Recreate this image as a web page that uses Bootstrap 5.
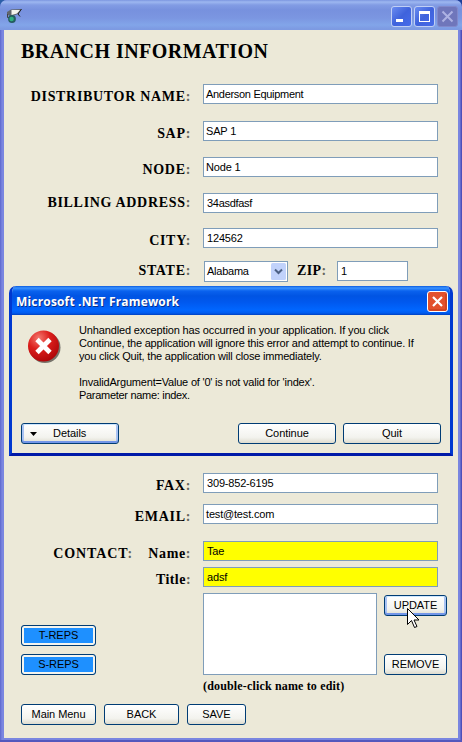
<!DOCTYPE html>
<html lang="en">
<head>
<meta charset="utf-8">
<meta name="viewport" content="width=device-width, initial-scale=1">
<title>Branch Information</title>
<link href="https://cdn.jsdelivr.net/npm/bootstrap@5.3.0/dist/css/bootstrap.min.css" rel="stylesheet">
<style>
body{width:462px;height:742px;overflow:hidden;background:linear-gradient(90deg,#2c5fa8,#1d3f98);font:11px/13px "Liberation Sans",Arial,sans-serif;color:#000}
.app-window{width:462px;height:742px;border-radius:7px 7px 0 0;background:linear-gradient(90deg,#5c66cc 0,#7a86e0 2px,#7a86e0 460px,#4d4fb8 461px);border-bottom:2px solid #5457bd;overflow:hidden}
.app-title{height:30px;padding:6px 4px 0 6px;background:linear-gradient(#7c96e0 0,#9db7f0 2px,#829ce4 5px,#7791de 10px,#7b96e1 18px,#82a5e9 25px,#7d9ae2 29px)}
.app-client{height:708px;margin:0 4px;padding:9px 11px 0 17px;background:#ece9d8}
.tools{gap:2px}
.tool{width:21px;height:21px;border:1px solid #c0cff5;border-radius:3px;background:linear-gradient(135deg,#6a8cf0,#3f63dc 50%,#466bea)}
.tool-off{border-color:#8189cb;background:#6f76bb}
h1{font:bold 20px/24px "Liberation Serif","Times New Roman",serif;letter-spacing:.46px;margin:0 0 21px}
.f-row{display:flex;align-items:flex-start;margin-bottom:16px}
.gap-6{margin-bottom:6px}.gap-11{margin-bottom:11px}.gap-13{margin-bottom:13px}.gap-15{margin-bottom:15px}.gap-17{margin-bottom:17px}
.f-label{font:bold 14px/14px "Liberation Serif","Times New Roman",serif;letter-spacing:.68px;text-align:right;white-space:nowrap;width:170px;height:20px;margin-right:12px;padding-top:6px;flex:none}
.f-label.raised{padding-top:3px}
.f-label.narrow{letter-spacing:.45px}
.f-label i{font-style:normal;color:#66655c}
.contact{letter-spacing:.9px}
.name-part{width:58px;letter-spacing:.6px}
.state-row{height:212px}
.state-label{margin-right:13px}
.zip-label{width:28px;margin:0 12px 0 9px;letter-spacing:.4px;text-align:left}
.f-box{width:235px;height:20px;border:1px solid #7f9db9;background:#fff;padding:3px 2px 0;line-height:13px;white-space:nowrap;letter-spacing:-.18px}
.f-box.tight{letter-spacing:-.3px}
.f-box.digits{padding-left:3px}
.f-box.state{width:84px;height:21px;padding-right:1px;letter-spacing:-.25px}
.f-box.state svg{margin-top:-2px}
.f-box.zip{width:71px;padding-left:3px}
.f-box.hot{background:#ff0;padding-left:3px}
.f-box.f-list{width:174px;height:82px}
.list-area{height:82px}
.reps-col{width:182px;gap:8px}
.edit-col{width:63px;margin-left:7px;padding-top:2px}
.xp{height:21px;border:1px solid #003c74;border-radius:3px;padding:0;font-size:11px;line-height:19px;color:#000;background:linear-gradient(#fff,#f3f3ee 70%,#dedccf);white-space:nowrap;letter-spacing:-.05px}
.xp.focus-blue{box-shadow:inset 0 1px #cee7ff,inset 0 -2px #7396e8,inset 2px 0 #a9c3f3,inset -2px 0 #a9c3f3}
.xp.reps{background:#1e90ff;box-shadow:inset 0 0 0 2px #f4f4ee}
.w-75px{width:75px}.w-59px{width:59px}.w-98px{width:98px}
.details{padding-left:8px}
.details span{margin-left:16px}
.continue{margin-left:119px}
.quit{margin-left:7px}
.dialog{position:absolute;left:9px;top:286px;width:444px;height:170px;border-radius:7px 7px 0 0;background:#ece9d8;border:3px solid #0038d0;border-top:0;border-bottom-color:#0019a8;overflow:hidden;z-index:2}
.dialog-bar{height:29px;margin:0 -3px;padding:2px 5px 0 7px;background:linear-gradient(#0a5ae0 0,#3a93ff 2px,#0a62ee 5px,#0054e3 10px,#0058ee 16px,#0066ff 24px,#005cf0 27px,#0040c0 29px)}
.dialog-name{font:bold 12px/16px "Open Sans","Noto Sans",sans-serif;letter-spacing:.17px;color:#fff;text-shadow:1px 1px #0a2f8c;white-space:nowrap;padding-top:1px}
.dialog-text{height:108px;padding:9px 0 0 16px}
.error-icon{margin-top:6px;flex:none}
.msg{white-space:nowrap;margin-left:17px;letter-spacing:-.2px}
.msg .first{letter-spacing:-.14px}
.msg .last{letter-spacing:-.3px}
.dialog-actions{padding-left:9px}
.note{font:bold 12px/13px "Liberation Serif","Times New Roman",serif;letter-spacing:.16px;margin:5px 0 11px 182px}
.pointer{position:absolute;left:407px;top:608px;z-index:3}
</style>
</head>
<body>
<div class="app-window">
  <div class="app-title d-flex align-items-start">
    <svg width="18" height="18" viewBox="0 0 18 18"><path d="M1 6 5 3.500 15.500 3 12 8 5 10.500 1 8.500z" fill="#60656b"/><path d="M5.500 4h8.500l-3 3.500-5.500 1.500z" fill="#f4f4ee"/><path d="M15.500 3 12 8l2 2.500" fill="none" stroke="#222"/><path d="M1.500 8v3.500h3" fill="none" stroke="#444"/><circle cx="6" cy="13" r="3.900" fill="#245d60"/><circle cx="5.600" cy="13" r="2.200" fill="#2fb080"/></svg>
    <div class="d-flex ms-auto tools">
      <div class="tool"><svg class="d-block" width="19" height="19"><path d="M4 12h7v3H4z" fill="#fff"/></svg></div>
      <div class="tool"><svg class="d-block" width="19" height="19"><path d="M4 4h11v11H4zM5 7v7h9V7z" fill="#fff" fill-rule="evenodd"/></svg></div>
      <div class="tool tool-off"><svg class="d-block" width="19" height="19"><path d="M4.500 4.500l10 10m0-10l-10 10" stroke="#adb2e3" stroke-width="2"/></svg></div>
    </div>
  </div>
  <main class="app-client">
    <h1>BRANCH INFORMATION</h1>
    <div class="f-row gap-17"><div class="f-label">DISTRIBUTOR NAME<i>:</i></div><div class="f-box tight">Anderson Equipment</div></div>
    <div class="f-row"><div class="f-label">SAP<i>:</i></div><div class="f-box">SAP 1</div></div>
    <div class="f-row"><div class="f-label">NODE<i>:</i></div><div class="f-box">Node 1</div></div>
    <div class="f-row gap-15"><div class="f-label raised">BILLING ADDRESS<i>:</i></div><div class="f-box tight digits">34asdfasf</div></div>
    <div class="f-row gap-13"><div class="f-label">CITY<i>:</i></div><div class="f-box digits">124562</div></div>
    <div class="f-row mb-0 state-row"><div class="f-label raised state-label">STATE<i>:</i></div>
      <div class="f-box state d-flex">Alabama
        <svg class="ms-auto" width="15" height="17"><rect width="15" height="17" rx="1.500" fill="#c1d2fb"/><path d="M4 6.500l3.500 3.500L11 6.500" fill="none" stroke="#4d6185" stroke-width="2"/></svg></div>
      <div class="f-label raised zip-label">ZIP<i>:</i></div>
      <div class="f-box zip">1</div>
    </div>
    <div class="f-row gap-11"><div class="f-label">FAX<i>:</i></div><div class="f-box digits">309-852-6195</div></div>
    <div class="f-row gap-17"><div class="f-label">EMAIL<i>:</i></div><div class="f-box">test@test.com</div></div>
    <div class="f-row gap-6"><div class="f-label"><span class="contact">CONTACT<i>:</i></span><span class="d-inline-block name-part">Name<i>:</i></span></div><div class="f-box hot">Tae</div></div>
    <div class="f-row gap-6"><div class="f-label narrow">Title<i>:</i></div><div class="f-box hot">adsf</div></div>
    <div class="d-flex list-area">
      <div class="d-flex flex-column justify-content-end reps-col"><button class="btn xp reps w-75px">T-REPS</button><button class="btn xp reps w-75px">S-REPS</button></div>
      <div class="f-box f-list"></div>
      <div class="d-flex flex-column justify-content-between edit-col"><button class="btn xp focus-blue">UPDATE</button><button class="btn xp">REMOVE</button></div>
    </div>
    <div class="note">(double-click name to edit)</div>
    <div class="d-flex gap-2"><button class="btn xp w-75px">Main Menu</button><button class="btn xp w-75px">BACK</button><button class="btn xp w-59px">SAVE</button></div>
  </main>
</div>
<section class="dialog" role="dialog">
  <div class="dialog-bar d-flex align-items-center"><span class="dialog-name">Microsoft .NET Framework</span>
    <svg class="ms-auto" width="21" height="21"><rect x=".5" y=".5" width="20" height="20" rx="2.500" fill="#e2512c" stroke="#fff"/><path d="M2 19h17V3" fill="none" stroke="#c33a16"/><path d="M6 6l9 9m0-9l-9 9" stroke="#fff" stroke-width="2.200"/></svg></div>
  <div class="d-flex dialog-text">
    <svg class="error-icon" width="34" height="34"><defs><radialGradient id="red" cx=".35" cy=".25" r=".8"><stop offset="0" stop-color="#f47a70"/><stop offset=".45" stop-color="#dc1f1c"/><stop offset="1" stop-color="#ad0508"/></radialGradient></defs><circle cx="17" cy="17.500" r="15.500" fill="#77736a"/><circle cx="15.500" cy="16" r="15.500" fill="url(#red)"/><path d="M9 9.500l13 13m0-13L9 22.500" stroke="#fff" stroke-width="4.800"/></svg>
    <div class="msg"><div class="first">Unhandled exception has occurred in your application. If you click</div><div>Continue, the application will ignore this error and attempt to continue. If</div><div>you click Quit, the application will close immediately.</div><br><div>InvalidArgument=Value of '0' is not valid for 'index'.</div><div class="last">Parameter name: index.</div></div>
  </div>
  <div class="d-flex dialog-actions">
    <button class="btn xp focus-blue d-flex align-items-center w-98px details"><svg width="7" height="4"><path d="M0 0h7L3.500 4z"/></svg><span>Details</span></button>
    <button class="btn xp w-98px continue">Continue</button><button class="btn xp w-98px quit">Quit</button>
  </div>
</section>
<svg class="pointer" width="13" height="21"><path d="M.5.5v16l4-4 3 7 2.500-1-3-6.500h5z" fill="#fff" stroke="#000"/></svg>
<script src="https://cdn.jsdelivr.net/npm/bootstrap@5.3.0/dist/js/bootstrap.bundle.min.js"></script>
</body>
</html>
